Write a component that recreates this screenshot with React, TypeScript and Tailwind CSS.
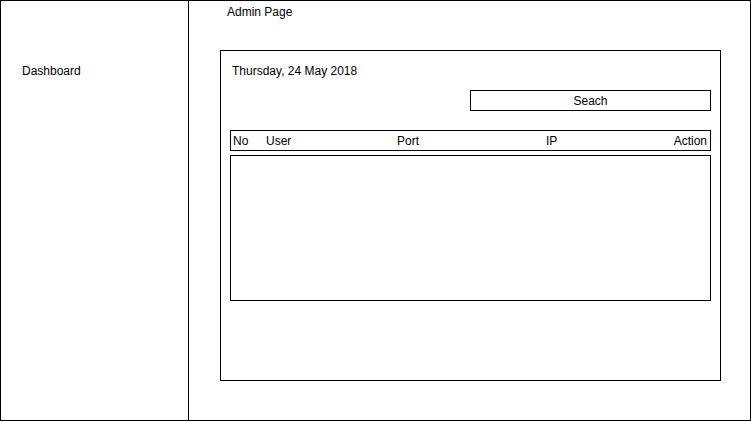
export default function App() {
  const columns = ["No", "User", "Port", "IP", "Action"]

  return (
    <div className="w-[751px] h-[422px] bg-white text-black text-[12px] leading-[14px] font-['Liberation_Sans',Arial,sans-serif]">
      <div className="flex w-[751px] h-[421px] border border-black">
        {/* Sidebar */}
        <div className="w-[188px] shrink-0 border-r border-black pt-[63px] pl-[21px]">
          <p>Dashboard</p>
        </div>

        {/* Main */}
        <div className="flex-1 flex flex-col">
          <p className="pl-[38px] pt-[4px]">Admin Page</p>

          <div className="ml-[31px] mt-[31px] w-[501px] h-[331px] border border-black flex flex-col">
            <p className="pl-[11px] pt-[13px]">Thursday, 24 May 2018</p>

            <div className="flex justify-end pr-[9px] mt-[12px]">
              <div className="w-[241px] h-[21px] border border-black flex items-center justify-center">
                Seach
              </div>
            </div>

            <div className="ml-[9px] mt-[19px] w-[481px] h-[21px] border border-black flex items-center pl-[2px] pr-[3px]">
              <span className="w-[33px]">{columns[0]}</span>
              <span className="w-[131px]">{columns[1]}</span>
              <span className="w-[149px]">{columns[2]}</span>
              <span className="flex-1">{columns[3]}</span>
              <span>{columns[4]}</span>
            </div>

            <div className="ml-[9px] mt-[4px] w-[481px] h-[146px] border border-black" />
          </div>
        </div>
      </div>
    </div>
  )
}
